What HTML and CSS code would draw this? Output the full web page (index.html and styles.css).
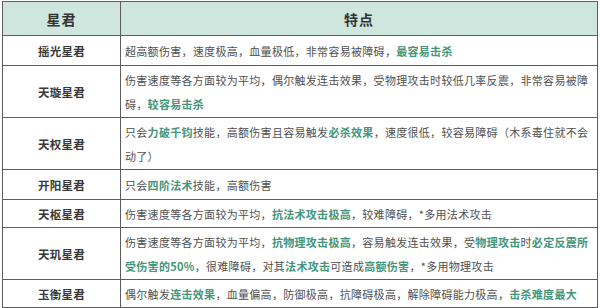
FILE: index.html
```html
<!DOCTYPE html>
<html lang="zh-CN">
<head>
    <meta charset="UTF-8">
    <title>星君特点</title>
    <link rel="stylesheet" href="styles.css">
</head>
<body>
    <table class="star-table">
        <thead>
            <tr>
                <th class="col-name">星君</th>
                <th>特点</th>
            </tr>
        </thead>
        <tbody>
            <tr class="tall">
                <td class="name">摇光星君</td>
                <td>超高额伤害，速度极高，血量极低，非常容易被障碍，<b>最容易击杀</b></td>
            </tr>
            <tr>
                <td class="name">天璇星君</td>
                <td>伤害速度等各方面较为平均，偶尔触发连击效果，受物理攻击时较低几率反震，非常容易被障<br>碍，<b>较容易击杀</b></td>
            </tr>
            <tr>
                <td class="name">天权星君</td>
                <td>只会<b>力破千钧</b>技能，高额伤害且容易触发<b>必杀效果</b>，速度很低，较容易障碍（木系毒住就不会<br>动了）</td>
            </tr>
            <tr class="tall">
                <td class="name">开阳星君</td>
                <td>只会<b>四阶法术</b>技能，高额伤害</td>
            </tr>
            <tr>
                <td class="name">天枢星君</td>
                <td>伤害速度等各方面较为平均，<b>抗法术攻击极高</b>，较难障碍，*多用法术攻击</td>
            </tr>
            <tr>
                <td class="name">天玑星君</td>
                <td>伤害速度等各方面较为平均，<b>抗物理攻击极高</b>，容易触发连击效果，受<b>物理攻击</b>时<b>必定反震所</b><br><b>受伤害的50%</b>，很难障碍，对其<b>法术攻击</b>可造成<b>高额伤害</b>，*多用物理攻击</td>
            </tr>
            <tr>
                <td class="name">玉衡星君</td>
                <td>偶尔触发<b>连击效果</b>，血量偏高，防御极高，抗障碍极高，解除障碍能力极高，<b>击杀难度最大</b></td>
            </tr>
        </tbody>
    </table>
</body>
</html>
```

FILE: styles.css
```css
body, html {
    margin: 0;
    padding: 0;
    background-color: #fff;
    font-family: "Noto Sans CJK SC", "Liberation Sans", sans-serif;
}

body {
    padding: 1px 2px 0 2px;
}

.star-table {
    width: 596px;
    border-collapse: collapse;
    color: #505050;
}

.star-table th,
.star-table td {
    border: 1px solid #5e5e5e;
}

.star-table th {
    height: 33px;
    padding: 0;
    background-color: #cfe6de;
    color: #333;
    font-size: 14px;
    font-weight: bold;
    letter-spacing: 1px;
}

.col-name {
    width: 117px;
}

.star-table td {
    padding: 2px 4px 1px 4px;
    font-size: 11px;
    letter-spacing: 0.3px;
    line-height: 24px;
    vertical-align: middle;
}

.star-table td.name {
    padding: 2px 0 1px 0;
    text-align: center;
    font-size: 11.5px;
    font-weight: bold;
    color: #383838;
}

.star-table tr.tall td {
    padding-top: 3px;
    padding-bottom: 2px;
}

.star-table b {
    color: #44957a;
    font-weight: bold;
}
```
